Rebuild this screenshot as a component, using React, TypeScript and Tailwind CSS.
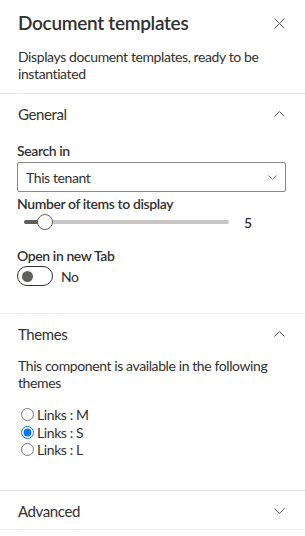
import React, { useState } from 'react';

const font = { fontFamily: 'Lato, "Open Sans", Arial, sans-serif' };

const Chevron: React.FC<{ up?: boolean; className?: string }> = ({ up, className }) => (
  <svg width="11" height="6" viewBox="0 0 11 6" className={className} fill="none">
    <path
      d={up ? 'M0.5 5.5 L5.5 0.5 L10.5 5.5' : 'M0.5 0.5 L5.5 5.5 L10.5 0.5'}
      stroke="#605e5c"
      strokeWidth="1"
    />
  </svg>
);

const SectionHeader: React.FC<{ title: string; open?: boolean }> = ({ title, open }) => (
  <div className="flex h-[38px] items-center justify-between pl-[18px] pr-[20px] pt-[2px]">
    <span className="text-[15px] leading-5 text-[#323130]">{title}</span>
    <Chevron up={open} />
  </div>
);

const themes = ['Links : M', 'Links : S', 'Links : L'];

export default function App() {
  const [theme, setTheme] = useState('Links : S');

  return (
    <div
      className="h-[536px] w-[305px] overflow-hidden bg-white tracking-[-0.4px] text-[#323130]"
      style={font}
    >
      <div className="border-b border-[#edebe9] pl-[18px] pr-[20px] pt-[9px] pb-[11px]">
        <div className="flex items-center justify-between">
          <h1 className="text-[19px] font-semibold leading-[28px] tracking-[-0.3px]">Document templates</h1>
          <svg width="11" height="11" viewBox="0 0 11 11" fill="none">
            <path d="M0.5 0.5 L10.5 10.5 M10.5 0.5 L0.5 10.5" stroke="#605e5c" strokeWidth="1" />
          </svg>
        </div>
        <p className="mt-[11px] text-[14px] leading-[17px]">
          Displays document templates, ready to be instantiated
        </p>
      </div>

      <div className="border-b border-[#edebe9]">
        <SectionHeader title="General" open />
        <div className="pl-[17px] pr-[19px] pb-[27px]">
          <div className="mt-[9px] text-[14px] font-semibold leading-5">Search in</div>
          <div className="mt-px flex h-[30px] items-center justify-between rounded-[2px] border border-[#8a8886] pl-[8px] pr-[8px]">
            <span className="text-[14px]">This tenant</span>
            <svg width="9" height="5" viewBox="0 0 9 5" fill="none">
              <path d="M0.5 0.5 L4.5 4.5 L8.5 0.5" stroke="#8a8886" strokeWidth="1" />
            </svg>
          </div>
          <div className="mt-[2px] text-[14px] font-semibold leading-5">Number of items to display</div>
          <div className="flex h-4 items-center">
            <div className="relative ml-[7px] h-[4px] w-[205px] rounded-full bg-[#c8c6c4]">
              <div className="h-full w-[21px] rounded-full bg-[#605e5c]" />
              <div className="absolute left-[13px] top-[-6px] h-4 w-4 rounded-full border-[1.5px] border-[#605e5c] bg-white" />
            </div>
            <span className="ml-[15px] text-[14px] font-semibold">5</span>
          </div>
          <div className="mt-4 text-[14px] font-semibold leading-5">Open in new Tab</div>
          <div className="flex h-5 items-center">
            <div className="flex h-5 w-[36px] items-center rounded-full border border-[#323130] pl-[4px]">
              <div className="h-[11px] w-[11px] rounded-full bg-[#605e5c]" />
            </div>
            <span className="ml-[8px] text-[14px]">No</span>
          </div>
        </div>
      </div>

      <div className="border-b border-[#edebe9]">
        <SectionHeader title="Themes" open />
        <div className="pl-[18px] pr-[20px] pb-[31px]">
          <p className="mt-[5px] text-[14px] leading-[17px]">
            This component is available in the following themes
          </p>
          <div className="mt-[15px] pl-[3px]">
            {themes.map((t) => (
              <label key={t} className="flex h-[17.5px] items-center text-[14px]">
                <input
                  type="radio"
                  name="theme"
                  checked={theme === t}
                  onChange={() => setTheme(t)}
                  className="m-0 mr-[3px] h-[13px] w-[13px]"
                />
                {t}
              </label>
            ))}
          </div>
        </div>
      </div>

      <div className="border-b border-[#edebe9]">
        <SectionHeader title="Advanced" />
      </div>
    </div>
  );
}
